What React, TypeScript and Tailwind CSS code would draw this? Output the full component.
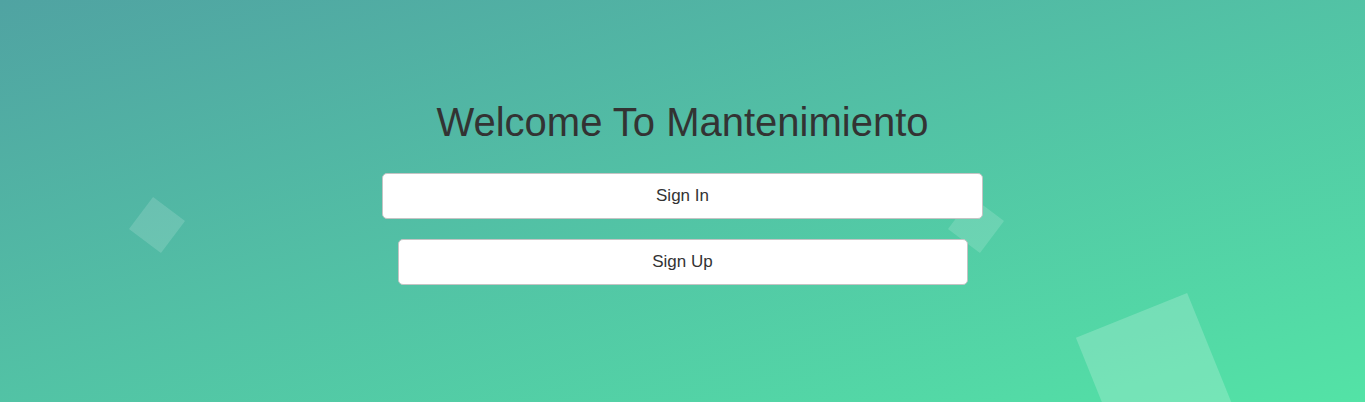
export default function App() {
  return (
    <div className="relative h-[402px] w-full overflow-hidden bg-gradient-to-br from-[#50a3a2] to-[#53e3a6] font-['Liberation_Sans',Arial,sans-serif]">
      {/* floating squares */}
      <div className="absolute left-[137px] top-[205px] h-[40px] w-[40px] rotate-[37deg] bg-white/15" />
      <div className="absolute left-[956px] top-[205px] h-[40px] w-[40px] rotate-[37deg] bg-white/15" />
      <div className="absolute left-[1094px] top-[311px] h-[120px] w-[120px] -rotate-[22deg] bg-white/20" />

      <div className="relative flex flex-col items-center pt-[99px]">
        <h1 className="text-[40px] leading-[46px] font-light text-[#333]">
          Welcome To Mantenimiento
        </h1>
        <button className="mt-[28px] h-[46px] w-[601px] rounded-[5px] border border-[#c4c4c4] bg-white text-[17px] text-[#333]">
          Sign In
        </button>
        <button className="mt-[20px] h-[46px] w-[570px] rounded-[5px] border border-[#c4c4c4] bg-white text-[17px] text-[#333]">
          Sign Up
        </button>
      </div>
    </div>
  );
}
